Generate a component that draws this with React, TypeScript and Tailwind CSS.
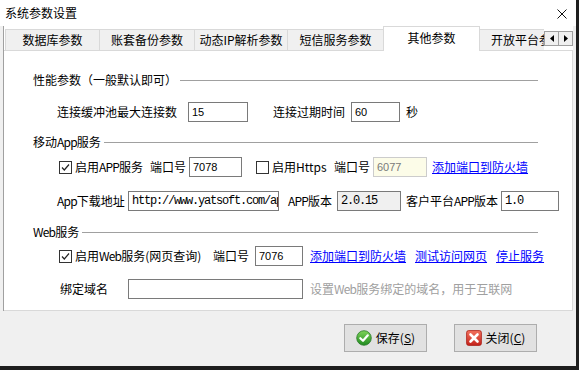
import React from "react";

// small win32-style controls

function Check({ checked }: { checked: boolean }) {
  return (
    <span className="flex-none w-[13px] h-[13px] border border-[#333333] bg-white flex items-center justify-center">
      {checked && (
        <svg width="11" height="11" viewBox="0 0 11 11">
          <path d="M2 5.5 L4.3 8 L9 2.5" fill="none" stroke="#222222" strokeWidth="1.2" />
        </svg>
      )}
    </span>
  );
}

function Field({ className, children }: { className: string; children?: React.ReactNode }) {
  return (
    <div
      className={
        "flex-none h-[20px] border flex items-center pl-[3px] overflow-hidden whitespace-nowrap " + className
      }
    >
      {children}
    </div>
  );
}

function Section({ title, className }: { title: React.ReactNode; className: string }) {
  return (
    <div className={"ml-[29px] w-[505px] h-[16px] flex items-center " + className}>
      <span className="whitespace-nowrap leading-[14px]">{title}</span>
      <div className="flex-1 h-px bg-[#a0a0a0] ml-[3px]" />
    </div>
  );
}

function Link({ text, className = "" }: { text: string; className?: string }) {
  return <span className={"flex-none text-[#0000ff] underline whitespace-nowrap " + className}>{text}</span>;
}

// latin runs inside CJK labels are narrower in the original
function L({ children }: { children: React.ReactNode }) {
  return <span className="tracking-[-0.8px]">{children}</span>;
}

const num = "font-['Liberation_Sans',sans-serif] text-[11px]";
const mono = "font-['Liberation_Mono',monospace] text-[12px] tracking-[-1.2px]";

const tabs = [
  { label: "数据库参数", w: "w-[95px]" },
  { label: "账套备份参数", w: "w-[96px]" },
  { label: "动态IP解析参数", w: "w-[94px]" },
  { label: "短信服务参数", w: "w-[97px]" },
];

export default function App() {
  return (
    <div className="w-[579px] h-[370px] bg-[#1e1e1e] overflow-hidden text-[12px] text-black font-['Noto_Sans_CJK_SC',sans-serif]">
      <div className="w-[576px] h-[366px] bg-[#f0f0f0] flex flex-col">
        {/* title bar */}
        <div className="h-[26px] flex-none bg-white flex items-center justify-between pl-[5px] pr-[9px]">
          <span className="leading-[14px]">系统参数设置</span>
          <svg width="10" height="10" viewBox="0 0 10 10" className="mt-[1px]">
            <path d="M0.5 0.5 L9.5 9.5 M9.5 0.5 L0.5 9.5" stroke="#111111" strokeWidth="1" />
          </svg>
        </div>

        <div className="flex h-[285px] flex-none">
          <div className="w-[4px] bg-[#f0f0f0] border-r border-[#a0a0a0]" />
          <div className="w-[569px] flex flex-col">
            {/* tab strip */}
            <div className="h-[25px] flex-none bg-white border-b border-[#d9d9d9] flex items-end">
              {tabs.map((t, i) => (
                <div
                  key={t.label}
                  className={
                    "flex-none h-[21px] bg-[#f0f0f0] border-t border-l border-r border-[#d9d9d9] flex items-center justify-center whitespace-nowrap leading-[14px] " +
                    t.w +
                    (i === 0 ? " ml-[1px]" : " -ml-px")
                  }
                >
                  {t.label}
                </div>
              ))}
              <div className="flex-none w-[97px] h-[25px] -ml-px -mb-px bg-white border-t border-l border-r border-[#d9d9d9] flex items-center justify-center pb-[3px] leading-[14px] relative">
                其他参数
              </div>
              <div className="flex-none w-[65px] h-[21px] -ml-px bg-[#f0f0f0] border-t border-l border-[#d9d9d9] flex items-center pl-[11px] overflow-hidden whitespace-nowrap leading-[14px]">
                开放平台参数
              </div>
              <div className="flex-none self-start mt-[5px] flex">
                <div className="w-[15px] h-[15px] border border-[#a0a0a0] bg-[#f0f0f0] flex items-center justify-center">
                  <svg width="4" height="7" viewBox="0 0 4 7">
                    <path d="M4 0 L0 3.5 L4 7 Z" fill="#000000" />
                  </svg>
                </div>
                <div className="w-[15px] h-[15px] -ml-px border border-[#a0a0a0] bg-[#f0f0f0] flex items-center justify-center">
                  <svg width="4" height="7" viewBox="0 0 4 7">
                    <path d="M0 0 L4 3.5 L0 7 Z" fill="#000000" />
                  </svg>
                </div>
              </div>
            </div>

            {/* panel */}
            <div className="h-[260px] flex-none bg-white border-r border-b border-[#d9d9d9] flex flex-col">
              <Section title="性能参数（一般默认即可）" className="mt-[21px]" />

              <div className="mt-[14px] h-[20px] flex items-center pl-[53px] leading-[14px]">
                <span className="flex-none w-[131px] whitespace-nowrap">连接缓冲池最大连接数</span>
                <Field className={"w-[60px] border-[#7a7a7a] bg-white " + num}>15</Field>
                <span className="flex-none ml-[25px] w-[78px] whitespace-nowrap">连接过期时间</span>
                <Field className={"w-[49px] border-[#7a7a7a] bg-white " + num}>60</Field>
                <span className="flex-none ml-[6px]">秒</span>
              </div>

              <Section title={<>移动<L>App</L>服务</>} className="mt-[12px]" />

              <div className="mt-[7px] h-[20px] flex items-center pl-[55px] leading-[14px]">
                <Check checked />
                <span className="flex-none ml-[3px] w-[75px] whitespace-nowrap">
                  启用<L>APP</L>服务
                </span>
                <span className="flex-none w-[39px] whitespace-nowrap">端口号</span>
                <Field className={"w-[53px] border-[#7a7a7a] bg-white " + num}>7078</Field>
                <span className="flex-none ml-[14px]">
                  <Check checked={false} />
                </span>
                <span className="flex-none ml-[3px] w-[62px] whitespace-nowrap">启用Https</span>
                <span className="flex-none w-[39px] whitespace-nowrap">端口号</span>
                <Field className={"w-[54px] border-[#cccccc] bg-[#fcfce8] text-[#7a7a7a] " + num}>6077</Field>
                <Link text="添加端口到防火墙" className="ml-[5px]" />
              </div>

              <div className="mt-[14px] h-[20px] flex items-center pl-[53px] leading-[14px]">
                <span className="flex-none w-[71px] whitespace-nowrap">
                  <L>App</L>下载地址
                </span>
                <Field className={"w-[151px] border-[#7a7a7a] bg-white " + mono}>http://www.yatsoft.com/app</Field>
                <span className="flex-none ml-[9px] w-[49px] whitespace-nowrap">
                  <L>APP</L>版本
                </span>
                <Field className={"w-[64px] border-[#7a7a7a] bg-[#f0f0f0] " + mono}>2.0.15</Field>
                <span className="flex-none ml-[5px] w-[95px] whitespace-nowrap">
                  客户平台<L>APP</L>版本
                </span>
                <Field className={"w-[58px] border-[#7a7a7a] bg-white " + mono}>1.0</Field>
              </div>

              <Section title={<><L>Web</L>服务</>} className="mt-[13px]" />

              <div className="mt-[6px] h-[20px] flex items-center pl-[55px] leading-[14px]">
                <Check checked />
                <span className="flex-none ml-[3px] w-[138px] whitespace-nowrap">
                  启用<L>Web</L>服务(网页查询)
                </span>
                <span className="flex-none w-[42px] whitespace-nowrap">端口号</span>
                <Field className={"w-[48px] border-[#7a7a7a] bg-white " + num}>7076</Field>
                <Link text="添加端口到防火墙" className="ml-[7px]" />
                <Link text="测试访问网页" className="ml-[9px]" />
                <Link text="停止服务" className="ml-[9px]" />
              </div>

              <div className="mt-[13px] h-[20px] flex items-center pl-[56px] leading-[14px]">
                <span className="flex-none w-[68px] whitespace-nowrap">绑定域名</span>
                <Field className="w-[175px] border-[#7a7a7a] bg-white" />
                <span className="flex-none ml-[7px] text-[#a0a0a0] whitespace-nowrap">
                  设置<L>Web</L>服务绑定的域名，用于互联网
                </span>
              </div>
            </div>
          </div>
          <div className="flex-1 bg-[#f0f0f0]" />
        </div>

        {/* buttons */}
        <div className="flex-1 flex items-start pt-[13px] pl-[344px]">
          <button className="w-[83px] h-[28px] border border-[#adadad] bg-[#e1e1e1] flex items-center justify-center gap-[4px] leading-[14px]">
            <svg width="16" height="16" viewBox="0 0 16 16">
              <defs>
                <linearGradient id="g1" x1="0" y1="0" x2="0" y2="1">
                  <stop offset="0" stopColor="#7fd45a" />
                  <stop offset="1" stopColor="#1f8a1f" />
                </linearGradient>
              </defs>
              <circle cx="8" cy="8" r="7.3" fill="url(#g1)" stroke="#2a7a2a" strokeWidth="0.8" />
              <path d="M4.3 8.2 L7 10.8 L11.8 5.3" fill="none" stroke="#ffffff" strokeWidth="2.2" strokeLinecap="round" strokeLinejoin="round" />
            </svg>
            <span>
              保存(<span className="underline">S</span>)
            </span>
          </button>
          <button className="ml-[27px] w-[83px] h-[28px] border border-[#adadad] bg-[#e1e1e1] flex items-center justify-center gap-[4px] leading-[14px]">
            <svg width="16" height="16" viewBox="0 0 16 16">
              <defs>
                <linearGradient id="g2" x1="0" y1="0" x2="0" y2="1">
                  <stop offset="0" stopColor="#f4735f" />
                  <stop offset="1" stopColor="#c4231b" />
                </linearGradient>
              </defs>
              <rect x="0.6" y="0.6" width="14.8" height="14.8" rx="2" fill="url(#g2)" stroke="#a81c14" strokeWidth="0.8" />
              <path d="M4.5 4.5 L11.5 11.5 M11.5 4.5 L4.5 11.5" stroke="#ffffff" strokeWidth="2.6" strokeLinecap="round" />
            </svg>
            <span>
              关闭(<span className="underline">C</span>)
            </span>
          </button>
        </div>
      </div>
    </div>
  );
}
